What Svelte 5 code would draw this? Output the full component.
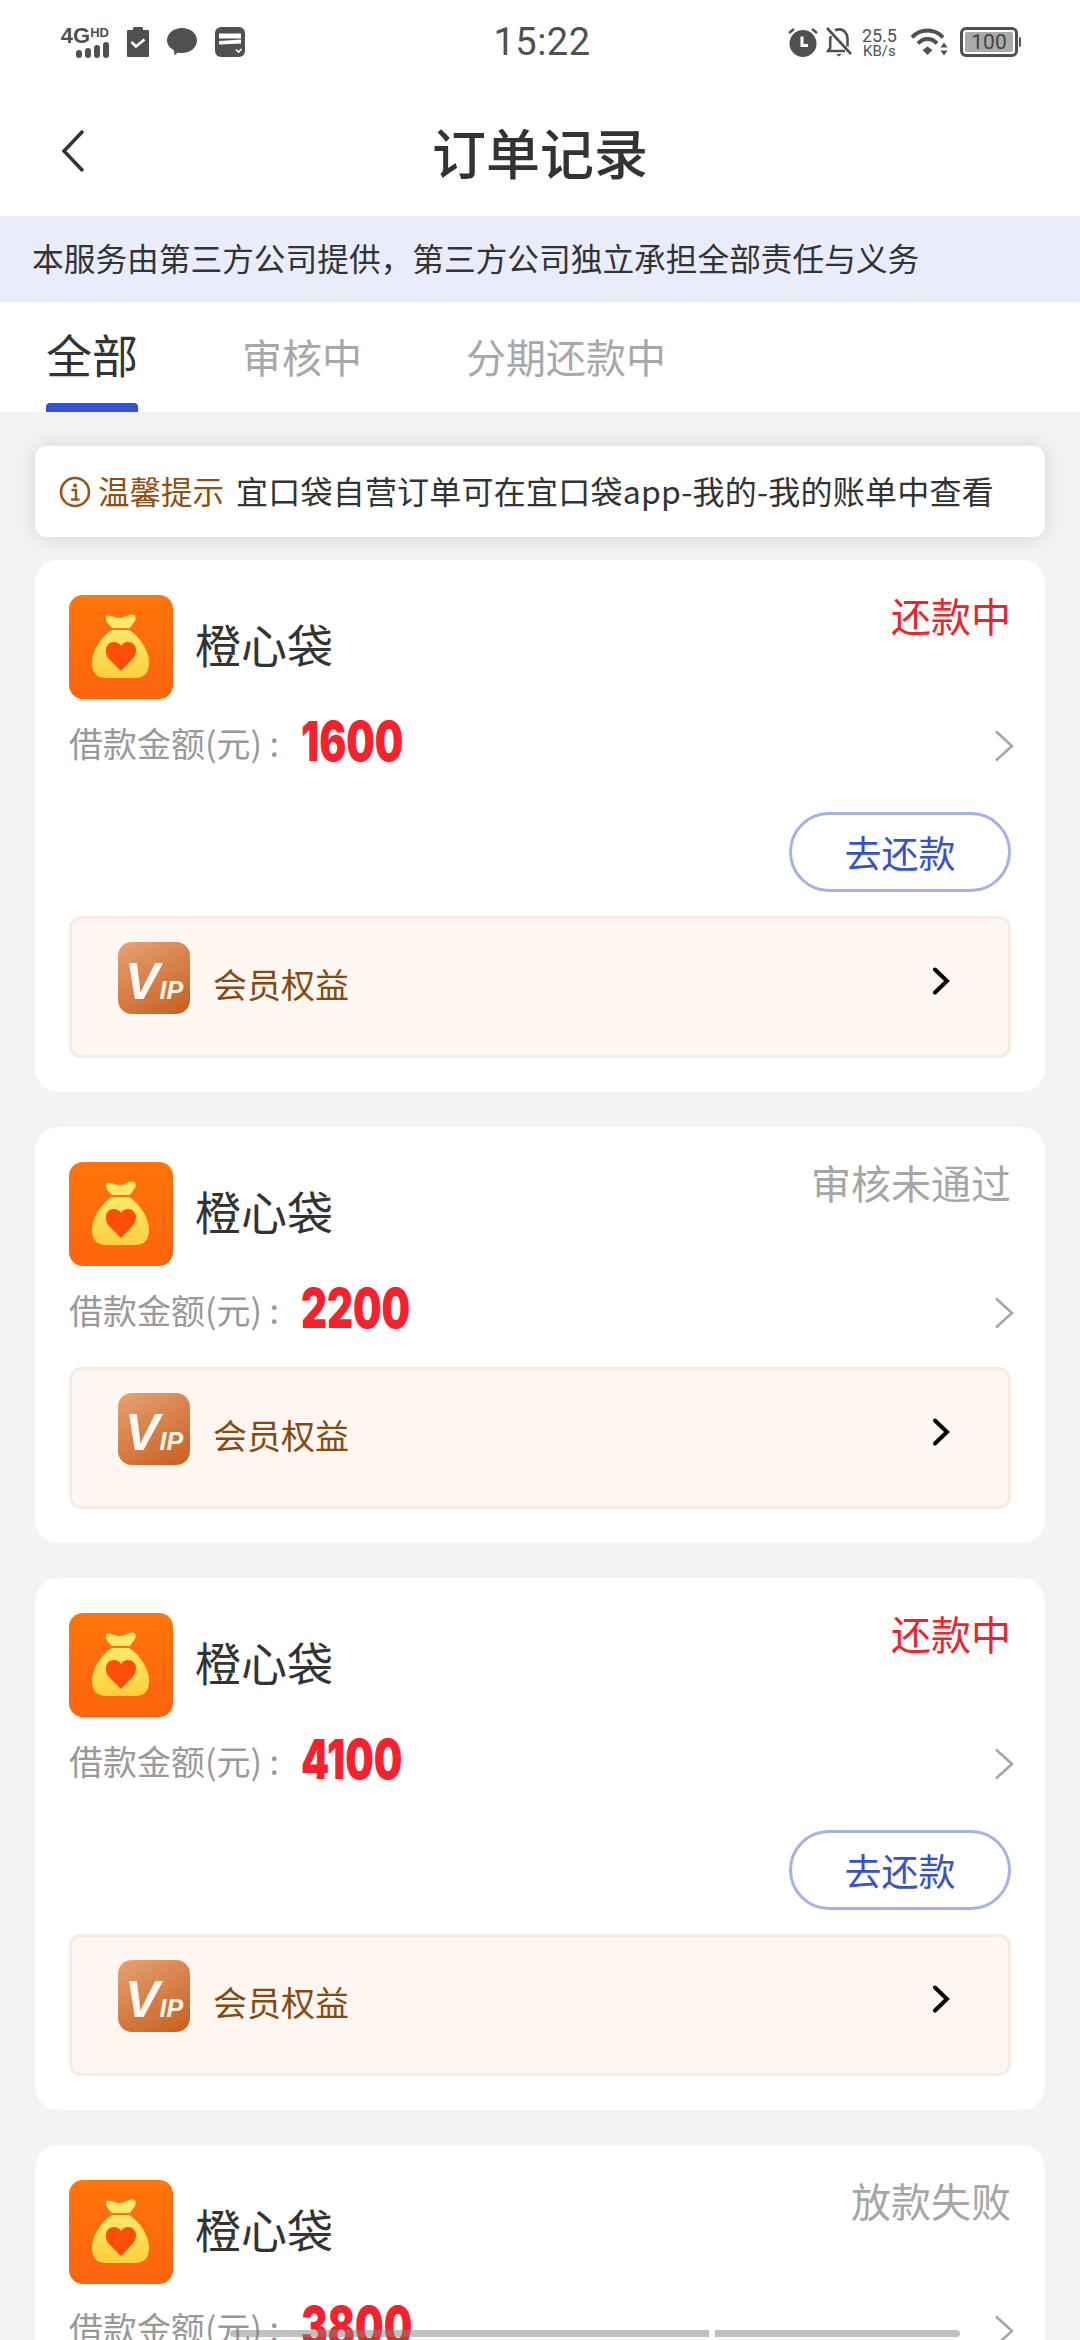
<script lang="ts">
	interface Order {
		amount: string;
		status: string;
		repaying: boolean;
	}

	const orders: Order[] = [
		{ amount: '1600', status: '还款中', repaying: true },
		{ amount: '2200', status: '审核未通过', repaying: false },
		{ amount: '4100', status: '还款中', repaying: true },
		{ amount: '3800', status: '放款失败', repaying: false }
	];

	const tabs = ['全部', '审核中', '分期还款中'];
</script>

<div class="page">
	<div class="statusbar">
		<div class="sb-left">
			<div class="net">
				<div class="net-top"><span class="g4">4G</span><span class="hd">HD</span></div>
				<div class="bars"><i style="height:8px"></i><i style="height:10px"></i><i style="height:13px"></i><i style="height:16px"></i></div>
			</div>
			<svg width="22" height="30" viewBox="0 0 22 30">
				<path d="M1 3h5V1.500C6 .7 6.700 0 7.500 0h7c.8 0 1.500.7 1.500 1.500V3h5c.5 0 1 .5 1 1v25c0 .5-.5 1-1 1H1c-.5 0-1-.5-1-1V4c0-.5.5-1 1-1z" fill="#505050" />
				<path d="M4.500 15l4.500 4.500 8.500-7" fill="none" stroke="#fff" stroke-width="2.600" />
			</svg>
			<svg width="30" height="28" viewBox="0 0 30 28">
				<path d="M15 0c8.300 0 15 5.300 15 12.500S23.300 25 15 25c-1.500 0-3 0-4.300-.5L7.500 27.500l-.5-5.300C2.800 20 0 16.500 0 12.500 0 5.300 6.700 0 15 0z" fill="#505050" />
			</svg>
			<svg width="30" height="30" viewBox="0 0 30 30">
				<rect width="30" height="30" rx="6" fill="#505050" />
				<path d="M4 6.500h22v5H4z" fill="#fff" />
				<path d="M4 14l22-1.500v4L4 17.500z" fill="#fff" />
				<path d="M21 22.500l2.500 2.500 3-3" fill="none" stroke="#fff" stroke-width="1.600" />
			</svg>
		</div>
		<div class="sb-time">15:22</div>
		<div class="sb-right">
			<svg width="30" height="30" viewBox="0 0 30 30">
				<circle cx="15" cy="16.500" r="13.500" fill="#505050" />
				<path d="M14 9.500v9h6" fill="none" stroke="#fff" stroke-width="3" />
				<path d="M1 6l5-4M29 6l-5-4" stroke="#505050" stroke-width="2.400" />
			</svg>
			<svg class="bell" width="26" height="30" viewBox="0 0 26 30">
				<path d="M5 9c-.6 1.200-.8 2.500-.8 4v8L2 24h17M9 3.500C10 2.800 11.500 2.400 13 2.400c5 0 8.500 4 8.500 9v8" fill="none" stroke="#505050" stroke-width="2.600" />
				<path d="M10 27h6l-3 2.500z" fill="#505050" />
				<path d="M1 1l24 26" stroke="#505050" stroke-width="2.600" />
			</svg>
			<div class="speed"><span class="sp-num">25.5</span><span class="sp-unit">KB/s</span></div>
			<svg class="wifi" width="38" height="28" viewBox="0 0 38 28">
				<path d="M1 9.500C5 5 11 2.500 16.500 2.500S28 5 32 9.500" fill="none" stroke="#505050" stroke-width="3.800" />
				<path d="M7 15.500c2.600-3 6-4.500 9.500-4.500s7 1.500 9.500 4.500" fill="none" stroke="#505050" stroke-width="3.800" />
				<path d="M11.500 22l5-3.500 5 3.500-5 5z" fill="#505050" />
				<path d="M33 14.500l3.500 5h-7zM33 27.500l-3.500-5h7z" fill="#505050" />
			</svg>
			<div class="battery"><div class="bat-fill">100</div></div>
			<div class="bat-tip"></div>
		</div>
	</div>

	<div class="navbar">
		<svg class="back" width="26" height="44" viewBox="0 0 26 44">
			<path d="M23 2L4 22l19 20" fill="none" stroke="#333" stroke-width="3.500" />
		</svg>
		<h1>订单记录</h1>
	</div>

	<div class="notice">本服务由第三方公司提供，第三方公司独立承担全部责任与义务</div>

	<div class="tabs">
		{#each tabs as tab, i}
			<div class="tab" class:active={i === 0}>{tab}</div>
		{/each}
	</div>

	<div class="content">
		<div class="tip">
			<svg width="32" height="32" viewBox="0 0 32 32">
				<circle cx="16" cy="16" r="14" fill="none" stroke="#9a5418" stroke-width="2.600" />
				<circle cx="16" cy="9.500" r="2" fill="#9a5418" />
				<path d="M12.500 14h4.500v9M12 23.500h8.500" fill="none" stroke="#9a5418" stroke-width="2.400" />
			</svg>
			<span class="tip-label">温馨提示</span>
			<span class="tip-text">宜口袋自营订单可在宜口袋app-我的-我的账单中查看</span>
		</div>

		{#each orders as order}
			<div class="card">
				<div class="card-head">
					<svg class="app-icon" width="104" height="104" viewBox="0 0 104 104">
						<defs>
							<linearGradient id="appBg" x1="0" y1="0" x2="0" y2="1">
								<stop offset="0" stop-color="#ff7508" />
								<stop offset="1" stop-color="#ff6410" />
							</linearGradient>
							<linearGradient id="bagFill" x1="0" y1="0" x2="0" y2="1">
								<stop offset="0" stop-color="#ffe869" />
								<stop offset="1" stop-color="#ffcf3c" />
							</linearGradient>
						</defs>
						<rect width="104" height="104" rx="14" fill="url(#appBg)" />
						<path d="M37 21C41 19 46 23 51 23C56 23 61 18 65 20C67 21 67 24 66 26C64 29 62 31 61 33H43C41 31 38 28 37 25Z" fill="#ffe869" />
						<path d="M43 35H60C70 41 80 55 80 68C80 78 75 83 66 83H37C28 83 23 78 23 68C23 55 33 41 43 35Z" fill="url(#bagFill)" />
						<path d="M52 76L40 64C37 61 37 57 37 55C37 50.500 40.500 47 45 47C48 47 50.500 48.500 52 51C53.500 48.500 56 47 59 47C63.500 47 67 50.500 67 55C67 58 66 61 63.500 64Z" fill="#ff4d0a" />
					</svg>
					<span class="app-name">橙心袋</span>
					<span class="status" class:red={order.repaying}>{order.status}</span>
				</div>
				<div class="amount-row">
					<span class="amount-label">借款金额(元) :</span>
					<span class="amount">{order.amount}</span>
					<svg class="more" width="20" height="32" viewBox="0 0 20 32">
						<path d="M2 1.500L18 16 2 30.500" fill="none" stroke="#a6a6a6" stroke-width="2.600" />
					</svg>
				</div>
				{#if order.repaying}
					<div class="action"><button class="repay">去还款</button></div>
				{/if}
				<div class="vip">
					<div class="vip-logo"><span class="v">V</span><span class="ip">IP</span></div>
					<span class="vip-text">会员权益</span>
					<svg class="vip-arrow" width="18" height="28" viewBox="0 0 18 28">
						<path d="M3 2.500L15 14 3 25.500" fill="none" stroke="#000" stroke-width="4" stroke-linecap="round" />
					</svg>
				</div>
			</div>
		{/each}
	</div>

	<div class="scroll-ind"><i class="seg1"></i><i class="seg2"></i></div>
</div>

<style>
	:global(body) {
		margin: 0;
		background: #f3f3f3;
	}

	.page {
		position: relative;
		width: 1080px;
		height: 2340px;
		overflow: hidden;
		background: #f3f3f3;
		font-family: 'Noto Sans CJK SC', 'Noto Sans', sans-serif;
		color: #333;
	}

	/* Status bar */
	.statusbar {
		display: grid;
		grid-template-columns: 1fr auto 1fr;
		align-items: center;
		height: 84px;
		padding: 0 59px 0 63px;
		background: #fff;
	}

	.sb-left {
		display: flex;
		align-items: center;
		gap: 18px;
	}

	.net {
		display: flex;
		flex-direction: column;
		align-items: flex-end;
		width: 46px;
	}

	.net-top {
		display: flex;
		align-items: flex-start;
		height: 15px;
		font-family: 'Liberation Sans', sans-serif;
		font-weight: 700;
		color: #505050;
		white-space: nowrap;
	}

	.g4 {
		font-size: 22px;
		line-height: 17px;
	}

	.hd {
		font-size: 13px;
		line-height: 12px;
	}

	.bars {
		display: flex;
		align-items: flex-end;
		gap: 3px;
		height: 16px;
	}

	.bars i {
		display: block;
		width: 6px;
		border-radius: 3px;
		background: #505050;
	}

	.sb-time {
		font-family: 'Roboto', sans-serif;
		font-size: 38px;
		color: #505050;
		letter-spacing: 0.5px;
	}

	.sb-right {
		display: flex;
		align-items: center;
		justify-content: flex-end;
	}

	.bell {
		margin-left: 8px;
	}

	.speed {
		display: flex;
		flex-direction: column;
		align-items: center;
		margin-left: 10px;
		font-family: 'Roboto', sans-serif;
		color: #505050;
	}

	.sp-num {
		font-size: 18px;
		line-height: 17px;
	}

	.sp-unit {
		font-size: 15px;
		line-height: 14px;
	}

	.wifi {
		margin-left: 14px;
	}

	.battery {
		box-sizing: border-box;
		width: 58px;
		height: 30px;
		margin-left: 11px;
		padding: 2px;
		border: 3px solid #505050;
		border-radius: 6px;
	}

	.bat-fill {
		height: 100%;
		border-radius: 2px;
		background: #aaa;
		font-family: 'Roboto', sans-serif;
		font-size: 21px;
		line-height: 20px;
		text-align: center;
		color: #444;
	}

	.bat-tip {
		width: 2px;
		height: 10px;
		margin-left: 1px;
		border-radius: 0 2px 2px 0;
		background: #505050;
	}

	/* Nav */
	.navbar {
		position: relative;
		display: flex;
		align-items: center;
		justify-content: center;
		height: 132px;
		background: #fff;
	}

	.back {
		position: absolute;
		left: 60px;
		top: 45px;
	}

	h1 {
		margin: 0;
		padding-top: 3px;
		font-size: 54px;
		font-weight: 500;
		line-height: 1;
		color: #333;
	}

	.notice {
		height: 86px;
		padding-left: 32px;
		font-size: 31.700px;
		line-height: 82px;
		background: #e9ecfb;
		color: #333;
		white-space: nowrap;
	}

	/* Tabs */
	.tabs {
		display: flex;
		gap: 104px;
		height: 110px;
		padding-left: 46px;
		background: #fff;
	}

	.tab {
		font-size: 40px;
		line-height: 108px;
		color: #a8a8a8;
		white-space: nowrap;
	}

	.tab.active {
		position: relative;
		font-size: 46px;
		line-height: 102px;
		color: #333;
	}

	.tab.active::after {
		content: '';
		position: absolute;
		left: 0;
		right: 0;
		bottom: 0;
		height: 9px;
		border-radius: 4px 4px 0 0;
		background: #3350dc;
	}

	/* List */
	.content {
		display: flex;
		flex-direction: column;
		gap: 35px;
		padding: 34px 35px 0 35px;
	}

	.tip {
		display: flex;
		align-items: center;
		height: 91px;
		margin-bottom: -12px;
		padding-left: 24px;
		border-radius: 12px;
		background: #fff;
		box-shadow: 0 0 22px rgba(0, 0, 0, 0.13);
		white-space: nowrap;
	}

	.tip-label {
		margin-left: 7px;
		padding-bottom: 4px;
		font-size: 31.500px;
		color: #8f4f12;
	}

	.tip-text {
		margin-left: 12px;
		padding-bottom: 4px;
		font-size: 32px;
		letter-spacing: 0.22px;
		color: #333;
	}

	.card {
		padding: 35px 34px 34px 34px;
		border-radius: 24px;
		background: #fff;
	}

	.card-head {
		display: flex;
		height: 104px;
	}

	.app-name {
		margin-left: 22px;
		font-size: 46px;
		line-height: 96px;
		color: #333;
	}

	.status {
		margin-left: auto;
		font-size: 40px;
		line-height: 40px;
		color: #a6a6a6;
	}

	.status.red {
		color: #e8262c;
	}

	.amount-row {
		display: flex;
		align-items: center;
		height: 92px;
	}

	.amount-label {
		margin-top: -6px;
		font-size: 34px;
		color: #999;
		white-space: nowrap;
	}

	.amount {
		display: inline-block;
		width: 110px;
		margin-top: -8px;
		margin-left: 22px;
		font-family: 'Inter', sans-serif;
		font-size: 55px;
		font-weight: 900;
		line-height: 60px;
		color: #f5222d;
		transform: scaleX(0.73);
		transform-origin: left center;
	}

	.more {
		margin-top: 2px;
		margin-right: -3px;
		margin-left: auto;
	}

	.action {
		display: flex;
		justify-content: flex-end;
		margin-top: 21px;
		margin-bottom: 24px;
	}

	.repay {
		box-sizing: border-box;
		width: 222px;
		height: 80px;
		padding: 0;
		border: 3px solid #a6b1e6;
		border-radius: 40px;
		background: #fff;
		font-family: inherit;
		font-size: 37px;
		color: #3a50c8;
	}

	.vip {
		display: flex;
		box-sizing: border-box;
		height: 142px;
		margin-top: 9px;
		padding: 23px 58px 0 46px;
		border: 3px solid #fbeadf;
		border-radius: 12px;
		background: #fef6f1;
	}

	.vip-logo {
		display: flex;
		flex-shrink: 0;
		align-items: flex-end;
		justify-content: center;
		box-sizing: border-box;
		width: 72px;
		height: 72px;
		padding-bottom: 14px;
		border-radius: 14px;
		background: linear-gradient(150deg, #e6a273, #c75e1d);
		font-family: 'Liberation Sans', sans-serif;
		font-style: italic;
		font-weight: 700;
		color: #fff7f0;
	}

	.v {
		font-size: 52px;
		line-height: 38px;
	}

	.ip {
		font-size: 25px;
		line-height: 20px;
	}

	.vip-text {
		margin-left: 23px;
		font-size: 34px;
		line-height: 84px;
		color: #854a12;
	}

	.vip-arrow {
		margin-top: 25px;
		margin-left: auto;
	}

	/* Bottom gesture bar over the list */
	.scroll-ind {
		position: absolute;
		left: 230px;
		top: 2330px;
		display: flex;
		gap: 6px;
		height: 7px;
	}

	.scroll-ind i {
		display: block;
		height: 7px;
		background: rgba(130, 130, 130, 0.5);
	}

	.seg1 {
		width: 479px;
		border-radius: 4px 0 0 4px;
	}

	.seg2 {
		width: 245px;
		border-radius: 0 4px 4px 0;
	}
</style>
